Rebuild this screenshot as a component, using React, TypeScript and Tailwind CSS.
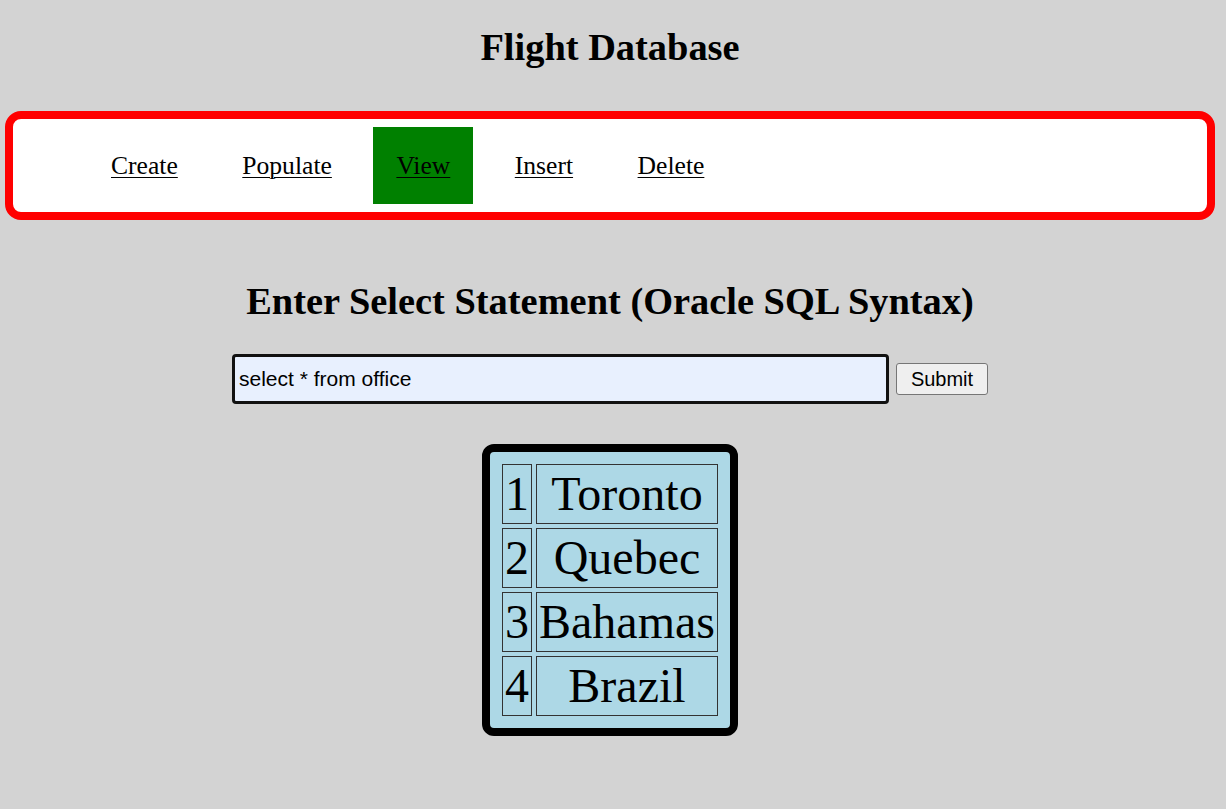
const links = ["Create", "Populate", "View", "Insert", "Delete"];

const rows = [
  { id: 1, city: "Toronto" },
  { id: 2, city: "Quebec" },
  { id: 3, city: "Bahamas" },
  { id: 4, city: "Brazil" },
];

export default function App() {
  return (
    <div className="min-h-screen bg-[#d3d3d3] pl-[5px] pr-[11px] pt-[25px] pb-10 font-['Liberation_Serif',serif] text-black">
      {/* Title */}
      <h1 className="text-center text-[38.4px] font-bold leading-[44px]">
        Flight Database
      </h1>

      {/* Nav */}
      <nav className="mt-[42px] rounded-[16px] border-[8px] border-[#ff0000] bg-white">
        <ul className="flex items-center gap-[18.5px] py-[8px] pl-[75px]">
          {links.map((l) => (
            <li key={l}>
              <a
                href="#"
                className={
                  "flex h-[77px] items-center px-[23px] pt-[2px] text-[25.6px] underline underline-offset-[3px] decoration-1 " +
                  (l === "View" ? "bg-[#008000]" : "")
                }
              >
                {l}
              </a>
            </li>
          ))}
        </ul>
      </nav>

      {/* Query */}
      <h2 className="mt-[59px] text-center text-[38.4px] font-bold leading-[44px]">
        Enter Select Statement (Oracle SQL Syntax)
      </h2>
      <div className="mt-[31px] flex items-center justify-center gap-[7px] font-['Liberation_Sans',Arial,sans-serif]">
        <input
          defaultValue="select * from office"
          className="h-[50px] w-[657px] rounded-[4px] border-[3px] border-[#111] bg-[#e8f0fe] px-[4px] text-[21px] text-black outline-none"
        />
        <button className="h-[32px] w-[92px] rounded-[3px] border border-[#767676] bg-[#efefef] text-[20px] text-black">
          Submit
        </button>
      </div>

      {/* Results */}
      <div className="mt-[40px] flex justify-center">
        <div className="rounded-[12px] border-[8px] border-black bg-[#add8e6] p-[8px]">
          <table className="border-separate border-spacing-[4px] text-[48px] leading-[56px]">
            <tbody>
              {rows.map((r) => (
                <tr key={r.id}>
                  <td className="border border-[#333] px-[2px] py-[1px] text-center">{r.id}</td>
                  <td className="border border-[#333] px-[2px] py-[1px] text-center">{r.city}</td>
                </tr>
              ))}
            </tbody>
          </table>
        </div>
      </div>
    </div>
  );
}
